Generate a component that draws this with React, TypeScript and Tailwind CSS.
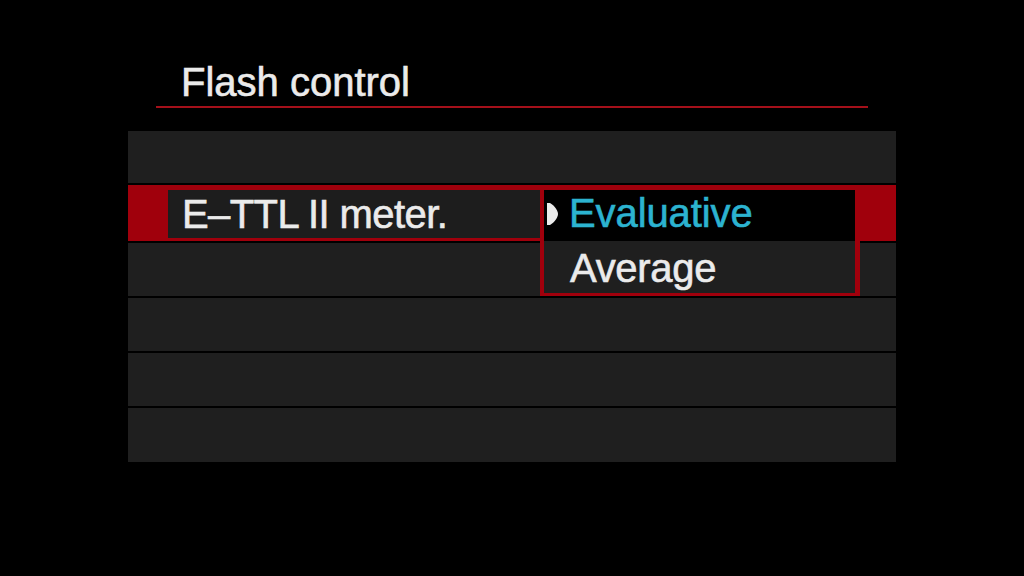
export default function App() {
  return (
    <div className="w-[1024px] h-[576px] bg-black overflow-hidden font-['Liberation_Sans',Arial,sans-serif] text-[#ebebeb] [-webkit-text-stroke:0.6px_currentColor]">
      {/* header */}
      <div className="pt-[58px]">
        <h1 className="ml-[181px] text-[40px] leading-[48px] tracking-[0px]">Flash control</h1>
        <div className="ml-[156px] w-[712px] h-[2px] bg-[#a4101a]"></div>
      </div>

      {/* menu panel */}
      <div className="relative ml-[128px] mt-[23px] w-[768px] flex flex-col gap-[2px]">
        <div className="h-[52px] bg-[#1f1f1f]"></div>

        <div className="h-[56px] bg-[#a0000c] pt-[5px] pl-[40px]">
          <div className="w-[372px] h-[48px] bg-[#1d1d1d] pl-[14px] text-[40px] leading-[48px] tracking-[-0.6px]">
            E–TTL II meter.
          </div>
        </div>

        <div className="h-[53px] bg-[#1f1f1f]"></div>
        <div className="h-[53px] bg-[#1f1f1f]"></div>
        <div className="h-[53px] bg-[#1f1f1f]"></div>
        <div className="h-[54px] bg-[#1f1f1f]"></div>

        {/* dropdown */}
        <div className="absolute left-[412px] top-[54px] w-[320px] h-[111px] border-[#a0000c] border-l-[4px] border-r-[5px] border-t-[5px] border-b-[3px] flex flex-col">
          <div className="h-[51px] bg-black flex items-start pt-[3px] pl-[3px]">
            <svg width="11" height="22" viewBox="0 0 11 22" className="mt-[10px] mr-[11px] shrink-0">
              <path d="M0 0 L3 0 C8 3 11 8 11 11 C11 14 8 19 3 22 L0 22 Z" fill="#ececec" />
            </svg>
            <span className="text-[40px] leading-[40px] text-[#2cb3d0] tracking-[-0.1px]">Evaluative</span>
          </div>
          <div className="flex-1 bg-[#1f1f1f] pl-[26px] pt-[7px] text-[40px] leading-[40px] tracking-[-0.3px]">
            Average
          </div>
        </div>
      </div>
    </div>
  );
}
